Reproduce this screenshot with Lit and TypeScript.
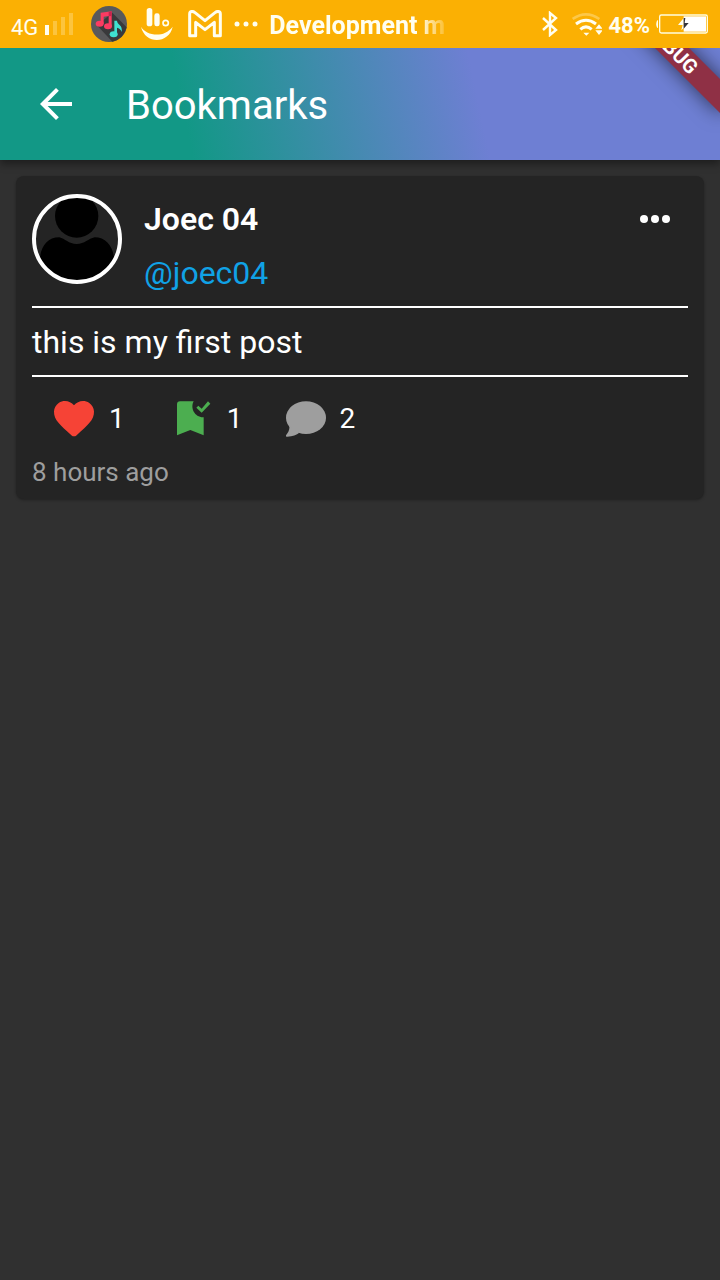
import { LitElement, html, css, svg } from "lit";
import { customElement, property } from "lit/decorators.js";

@customElement("status-bar")
class StatusBar extends LitElement {
  static styles = css`
    :host {
      display: flex;
      align-items: center;
      justify-content: space-between;
      height: 48px;
      padding: 0 12px 0 11px;
      background: #fbb003;
      color: #fffef0;
      font-weight: 700;
      position: relative;
      z-index: 2;
    }
    svg {
      display: block;
      flex: none;
    }
    .side {
      display: flex;
      align-items: center;
    }
    .net {
      font-size: 22px;
      font-weight: 400;
      line-height: 26px;
      padding-top: 8px;
      margin-right: 6px;
    }
    .bars {
      margin-right: 17px;
    }
    .music {
      margin-right: 13px;
    }
    .hand {
      margin-right: 14px;
    }
    .mail {
      margin-right: 12px;
    }
    .dots {
      margin-right: 11px;
    }
    .note {
      font-size: 25px;
      line-height: 30px;
      padding-top: 4px;
      white-space: nowrap;
      width: 176px;
      overflow: hidden;
      mask-image: linear-gradient(90deg, #000 150px, transparent 182px);
    }
    .bt {
      margin-right: 13px;
    }
    .wifi {
      margin-right: 6px;
    }
    .pct {
      font-size: 22px;
      line-height: 26px;
      padding-top: 3px;
      margin-right: 6px;
    }
  `;

  render() {
    return html`
      <div class="side">
        <span class="net">4G</span>
        <svg class="bars" width="30" height="24" viewBox="0 0 30 24" fill="#fffef0">
          <path d="M1 13h4v10H1z" />
          <path opacity=".25" d="M9 9h4v14H9zM17 5h4v18h-4zM25 1h4v22h-4z" />
        </svg>
        <svg class="music" width="36" height="36" viewBox="0 0 108 108">
          <circle cx="54" cy="54" r="54" fill="#59595b" />
          <path fill="#39393b" d="M64 20 107 64A54 54 0 0 1 64 107L18 58Z" />
          <g fill="#fb3b62">
            <path d="M29 20 62 16V60H53V30L38 32V54H29Z" />
            <ellipse cx="26" cy="53" rx="12" ry="9" />
            <ellipse cx="51" cy="61" rx="12" ry="9" />
          </g>
          <path fill="#c7234d" d="M53 18 62 16V30L53 31Z" />
          <g fill="#3fe0d0">
            <path d="M70 44h8c0 12 18 12 14 34-3-9-8-12-14-13v19h-8Z" />
            <ellipse cx="68" cy="85" rx="12" ry="9" />
          </g>
        </svg>
        <svg class="hand" width="34" height="34" viewBox="0 0 102 102" fill="#fffef0">
          <rect x="20" y="3" width="17" height="55" rx="8" />
          <rect x="43" y="19" width="16" height="39" rx="7" />
          <circle cx="77" cy="48" r="8" fill="none" stroke="#fffef0" stroke-width="5" />
          <path d="M3 59C18 85 70 96 98 59 88 110 16 114 3 59Z" />
        </svg>
        <svg class="mail" width="34" height="28" viewBox="0 0 102 84">
          <path
            fill="none"
            stroke="#fffef0"
            stroke-width="9"
            stroke-linejoin="round"
            d="M5 12C5 3 14 2 21 8L51 32 81 8C88 2 97 3 97 12V77H79V37L51 59 23 37V77H5Z"
          />
        </svg>
        <svg class="dots" width="24" height="6" viewBox="0 0 24 6" fill="#fffef0">
          <circle cx="3" cy="3" r="2.5" />
          <circle cx="12" cy="3" r="2.5" />
          <circle cx="21" cy="3" r="2.5" />
        </svg>
        <span class="note">Development mode</span>
      </div>
      <div class="side">
        <svg class="bt" width="18" height="26" viewBox="0 0 18 26">
          <path
            fill="none"
            stroke="#fffef0"
            stroke-width="2.4"
            d="M2 7 15 19 9 24V2L15 7 2 19"
          />
        </svg>
        <svg class="wifi" width="30" height="24" viewBox="0 0 90 72" fill="none" stroke="#fffef0">
          <path opacity=".3" stroke-width="8" d="M2 21Q42-7 82 21" />
          <path stroke-width="9" d="M12 36Q42 13 72 36M25 52Q42 37 59 52" />
          <path fill="#fffef0" stroke="none" d="M34 62H52L43 71ZM70 50 81 37 92 50ZM70 55H92L81 69Z" />
        </svg>
        <span class="pct">48%</span>
        <svg width="52" height="20" viewBox="0 0 156 60">
          <path fill="#fffef0" d="M6 18C-1 20-1 41 6 42Z" />
          <rect x="11" y="3" width="143" height="54" rx="5" fill="none" stroke="#fffde0" stroke-width="4" />
          <path fill="#fff" d="M83 7H150V53H83Z" />
          <path fill="#fffef0" d="M83 12 66 33H80L76 49 83 42Z" />
          <path fill="#34343c" d="M83 12H88L86 27H98L83 44Z" />
        </svg>
      </div>
    `;
  }
}

@customElement("top-bar")
class TopBar extends LitElement {
  static styles = css`
    :host {
      display: block;
      position: relative;
      z-index: 1;
    }
    header {
      position: relative;
      display: flex;
      align-items: center;
      gap: 46px;
      height: 112px;
      padding-left: 32px;
      box-sizing: border-box;
      overflow: hidden;
      background: linear-gradient(78deg, #129886 26%, #6e7fd3 66%);
      box-shadow: 0 4px 8px rgba(0, 0, 0, 0.4);
    }
    button {
      border: 0;
      padding: 0;
      background: none;
      color: #fff;
    }
    svg {
      display: block;
    }
    h1 {
      margin: 0;
      padding-top: 4px;
      font-size: 40px;
      line-height: 48px;
      font-weight: 400;
      color: #fff;
    }
    .ribbon {
      position: absolute;
      top: -12px;
      right: -32px;
      width: 160px;
      height: 24px;
      transform: rotate(45deg);
      background: #8f3045;
      box-shadow: 0 0 20px rgba(0, 0, 0, 0.6);
      color: #fff;
      font-size: 20px;
      line-height: 24px;
      font-weight: 700;
      text-align: center;
    }
  `;

  render() {
    return html`
      <header>
        <button aria-label="Back">
          <svg width="48" height="48" viewBox="0 0 24 24" fill="currentColor">
            <path d="M20 11H7.83l5.59-5.59L12 4l-8 8 8 8 1.41-1.41L7.83 13H20v-2z" />
          </svg>
        </button>
        <h1>Bookmarks</h1>
        <div class="ribbon">DEBUG</div>
      </header>
    `;
  }
}

const heart = svg`<svg width="42" height="40" viewBox="1.5 2 21 20" fill="#f64336">
  <path d="M13.2 20.2c-.7.6-1.7.6-2.4 0l-.25-.2C5.3 15.27 1.87 12.5 2 8.28c.06-1.7.93-3.33 2.34-4.29 2.64-1.8 5.9-.96 7.66 1.1 1.76-2.06 5.02-2.91 7.66-1.1 1.41.96 2.28 2.59 2.34 4.29.14 4.22-3.3 6.99-8.55 11.72z"/>
</svg>`;

const bookmark = svg`<svg width="34" height="40" viewBox="0 0 102 120" fill="#4cae50">
  <path d="M0 16Q0 7 9 7H50C39 27 53 56 80 55V109L40 93 0 109Z"/>
  <path d="M58 26 64 20 74 29 93 7 100 14 74 41Z"/>
</svg>`;

const comment = svg`<svg width="40" height="40" viewBox="0 0 120 120" fill="#9e9e9e">
  <ellipse cx="60" cy="56" rx="60" ry="49"/>
  <path d="M10 80C12 93 6 101 0 109-1 112 1 113 4 113 20 112 32 107 40 101Z"/>
</svg>`;

@customElement("post-card")
class PostCard extends LitElement {
  @property() name = "";
  @property() handle = "";
  @property() text = "";
  @property() age = "";
  @property({ type: Number }) likes = 0;
  @property({ type: Number }) saves = 0;
  @property({ type: Number }) replies = 0;

  static styles = css`
    article {
      display: block;
      margin: 16px;
      padding: 18px 16px 12px;
      border-radius: 8px;
      background: #242424;
      box-shadow: 0 1px 3px rgba(0, 0, 0, 0.35);
      color: #fff;
      font-size: 32px;
      line-height: 38px;
    }
    svg {
      display: block;
    }
    button {
      display: flex;
      align-items: center;
      border: 0;
      padding: 0;
      background: none;
      color: #fff;
      font: inherit;
    }
    .head {
      display: flex;
      align-items: flex-start;
      gap: 22px;
      height: 112px;
    }
    .who {
      flex: 1;
      display: flex;
      flex-direction: column;
      align-items: flex-start;
      gap: 16px;
      padding-top: 6px;
    }
    .name {
      font-weight: 600;
    }
    .handle {
      color: #10a2e6;
      text-decoration: none;
    }
    .more {
      padding: 20px 15px;
    }
    .body {
      margin: 0;
      padding: 15px 0 14px;
      border: solid #fff;
      border-width: 2px 0;
    }
    .actions {
      display: flex;
      align-items: center;
      padding: 22px 21px 0;
      font-size: 28px;
      line-height: 40px;
    }
    .actions button {
      gap: 14px;
    }
    .like {
      margin-right: 52px;
    }
    .actions .save {
      gap: 16px;
      margin-right: 43px;
    }
    time {
      display: block;
      padding-top: 18px;
      font-size: 26px;
      line-height: 30px;
      color: #9e9e9e;
    }
  `;

  render() {
    return html`
      <article>
        <div class="head">
          <svg width="90" height="90" viewBox="0 0 270 270" role="img" aria-label="Avatar">
            <clipPath id="disc"><circle cx="135" cy="135" r="126" /></clipPath>
            <g clip-path="url(#disc)">
              <circle cx="134" cy="66" r="65" />
              <path
                d="M24 190C28 155 48 130 82 130 99 134 110 150 134 150 158 150 169 134 188 130 220 130 242 155 246 190V270H24Z"
              />
            </g>
            <circle cx="135" cy="135" r="129" fill="none" stroke="#fff" stroke-width="12" />
          </svg>
          <div class="who">
            <span class="name">${this.name}</span>
            <a class="handle" href="#">${this.handle}</a>
          </div>
          <button class="more" aria-label="More">
            <svg width="34" height="10" viewBox="0 0 34 10" fill="#fff">
              <circle cx="5" cy="5" r="4" />
              <circle cx="16" cy="5" r="4" />
              <circle cx="27" cy="5" r="4" />
            </svg>
          </button>
        </div>
        <p class="body">${this.text}</p>
        <div class="actions">
          <button class="like" aria-label="Like">${heart}<span>${this.likes}</span></button>
          <button class="save" aria-label="Bookmark">${bookmark}<span>${this.saves}</span></button>
          <button aria-label="Comment">${comment}<span>${this.replies}</span></button>
        </div>
        <time>${this.age}</time>
      </article>
    `;
  }
}

@customElement("app-root")
class AppRoot extends LitElement {
  static styles = css`
    :host {
      display: block;
      min-height: 100vh;
      background: #303030;
      font-family: Roboto, "Liberation Sans", sans-serif;
    }
  `;

  render() {
    return html`
      <status-bar></status-bar>
      <top-bar></top-bar>
      <main>
        <post-card
          name="Joec 04"
          handle="@joec04"
          text="this is my first post"
          age="8 hours ago"
          likes="1"
          saves="1"
          replies="2"
        ></post-card>
      </main>
    `;
  }
}
